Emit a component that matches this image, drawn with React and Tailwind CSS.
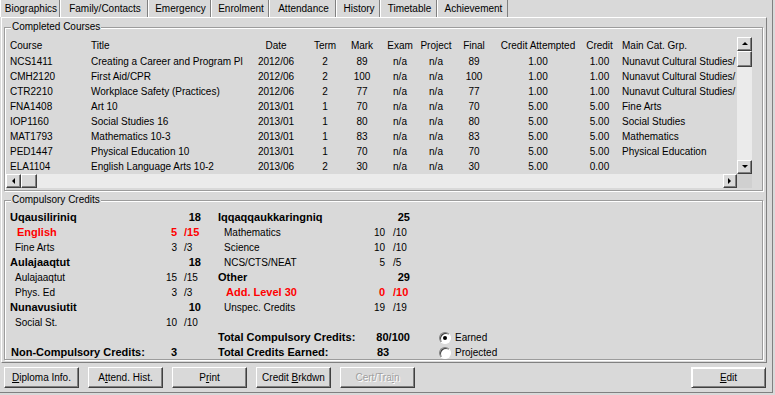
import React from "react";

const tabs = [
  { label: "Biographics", w: "w-[60px]" },
  { label: "Family/Contacts", w: "w-[88px]" },
  { label: "Emergency", w: "w-[63px]" },
  { label: "Enrolment", w: "w-[58px]" },
  { label: "Attendance", w: "w-[67px]" },
  { label: "History", w: "w-[44px]" },
  { label: "Timetable", w: "w-[57px]" },
  { label: "Achievement", w: "w-[71px]" },
];

const courses = [
  ["NCS1411", "Creating a Career and Program Planning", "2012/06", "2", "89", "n/a", "n/a", "89", "1.00", "1.00", "Nunavut Cultural Studies/"],
  ["CMH2120", "First Aid/CPR", "2012/06", "2", "100", "n/a", "n/a", "100", "1.00", "1.00", "Nunavut Cultural Studies/"],
  ["CTR2210", "Workplace Safety (Practices)", "2012/06", "2", "77", "n/a", "n/a", "77", "1.00", "1.00", "Nunavut Cultural Studies/"],
  ["FNA1408", "Art 10", "2013/01", "1", "70", "n/a", "n/a", "70", "5.00", "5.00", "Fine Arts"],
  ["IOP1160", "Social Studies 16", "2013/01", "1", "80", "n/a", "n/a", "80", "5.00", "5.00", "Social Studies"],
  ["MAT1793", "Mathematics 10-3", "2013/01", "1", "83", "n/a", "n/a", "83", "5.00", "5.00", "Mathematics"],
  ["PED1447", "Physical Education 10", "2013/01", "1", "70", "n/a", "n/a", "70", "5.00", "5.00", "Physical Education"],
  ["ELA1104", "English Language Arts 10-2", "2013/06", "2", "30", "n/a", "n/a", "30", "5.00", "0.00", ""],
];

const headers = ["Course", "Title", "Date", "Term", "Mark", "Exam", "Project", "Final", "Credit Attempted", "Credit", "Main Cat. Grp."];

// cell alignment per column
const cellCls = [
  "pl-[4px]",
  "pl-[2px]",
  "text-center",
  "text-center",
  "text-center",
  "text-center",
  "text-center",
  "text-center",
  "text-center",
  "text-center",
  "pl-[6px]",
];

const gridCols = "grid grid-cols-[83px_154px_66px_32px_42px_34px_38px_38px_90px_33px_121px]";

const leftRows = [
  { type: "cat", label: "Uqausiliriniq", total: "18" },
  { type: "sub", label: "English", num: "5", of: "/15", red: true },
  { type: "sub", label: "Fine Arts", num: "3", of: "/3" },
  { type: "cat", label: "Aulajaaqtut", total: "18" },
  { type: "sub", label: "Aulajaaqtut", num: "15", of: "/15" },
  { type: "sub", label: "Phys. Ed", num: "3", of: "/3" },
  { type: "cat", label: "Nunavusiutit", total: "10" },
  { type: "sub", label: "Social St.", num: "10", of: "/10" },
];

const midRows = [
  { type: "cat", label: "Iqqaqqaukkaringniq", total: "25" },
  { type: "sub", label: "Mathematics", num: "10", of: "/10" },
  { type: "sub", label: "Science", num: "10", of: "/10" },
  { type: "sub", label: "NCS/CTS/NEAT", num: "5", of: "/5" },
  { type: "cat", label: "Other", total: "29" },
  { type: "sub", label: "Add. Level 30", num: "0", of: "/10", red: true },
  { type: "sub", label: "Unspec. Credits", num: "19", of: "/19" },
];

const raised =
  "bg-[#d9d9d9] border border-t-white border-l-white border-r-[#404040] border-b-[#404040] shadow-[inset_-1px_-1px_0_#808080]";

function Arrow({ dir }) {
  const pts = {
    up: "1,5 4,2 7,5",
    down: "1,2 4,5 7,2",
    left: "5,1 2,4 5,7",
    right: "2,1 5,4 2,7",
  }[dir];
  return (
    <svg width="8" height="8" viewBox="0 0 8 8">
      <polygon points={pts} fill="#000" />
    </svg>
  );
}

function GroupBox({ title, className, children }) {
  return (
    <div className={"relative border border-[#9c9c9c] shadow-[inset_1px_1px_0_#fff,1px_1px_0_#fff] " + className}>
      <span className="absolute -top-[7px] left-[6px] bg-[#d9d9d9] px-[1px] leading-[12px]">{title}</span>
      {children}
    </div>
  );
}

function Btn({ children, className = "", disabled }) {
  return (
    <button
      className={
        "h-[21px] w-[75px] flex items-center justify-center leading-none " +
        raised +
        (disabled ? " text-[#a0a0a0] [text-shadow:1px_1px_0_#fff]" : " text-black") +
        " " +
        className
      }
    >
      <span className="whitespace-pre">{children}</span>
    </button>
  );
}

function SubRow({ r, labelW, indent, redIndent, gapW, ofW }) {
  return (
    <div className={"h-[15px] flex items-center " + (r.red ? "text-[#ff0000] font-bold text-[11px]" : "")}>
      <span className={labelW + " " + (r.red ? redIndent : indent) + " whitespace-nowrap"}>{r.label}</span>
      <span className="w-[20px] text-right">{r.num}</span>
      <span className={gapW} />
      <span className={ofW}>{r.of}</span>
    </div>
  );
}

export default function App() {
  return (
    <div className="w-[775px] h-[395px] bg-[#d9d9d9] font-['Liberation_Sans',Arial,sans-serif] text-[10px] text-black overflow-hidden">
      <div className="w-[773px] h-[393px] border-r border-b border-[#808080] flex flex-col">
        {/* tabs */}
        <div className="h-[17px] flex">
          {tabs.map((t) => (
            <div
              key={t.label}
              className={
                t.w +
                " h-full flex items-center justify-center pl-[2px] border-l border-white border-r border-r-[#808080] whitespace-nowrap"
              }
            >
              {t.label}
            </div>
          ))}
        </div>

        {/* tab page */}
        <div className="ml-[1px] w-[766px] h-[346px] border-t border-l border-white border-r border-b border-r-[#808080] border-b-[#808080] pl-[2px]">
          <GroupBox title="Completed Courses" className="mt-[9px] w-[759px] h-[164px]">
            <div className="pt-[9px] pl-[1px] flex">
              <div className="flex flex-col">
                <div className="w-[731px] h-[137px] overflow-hidden">
                  <div className={gridCols + " h-[17px] items-center"}>
                    {headers.map((h, i) => (
                      <div key={h} className={cellCls[i] + " whitespace-nowrap overflow-hidden"}>
                        {h}
                      </div>
                    ))}
                  </div>
                  {courses.map((row) => (
                    <div key={row[0]} className={gridCols + " h-[15px] items-center"}>
                      {row.map((c, i) => (
                        <div key={i} className={cellCls[i] + " whitespace-nowrap overflow-hidden text-clip"}>
                          {c}
                        </div>
                      ))}
                    </div>
                  ))}
                </div>
                {/* horizontal scrollbar */}
                <div className="w-[731px] h-[14px] flex bg-[#ebebeb]">
                  <div className={"w-[15px] h-full flex items-center justify-center " + raised}>
                    <Arrow dir="left" />
                  </div>
                  <div className={"w-[16px] h-full " + raised} />
                  <div className="flex-1" />
                  <div className={"w-[14px] h-full flex items-center justify-center " + raised}>
                    <Arrow dir="right" />
                  </div>
                </div>
              </div>
              {/* vertical scrollbar */}
              <div className="flex flex-col">
                <div className="w-[15px] h-[137px] flex flex-col bg-[#ebebeb]">
                  <div className={"h-[14px] flex items-center justify-center " + raised}>
                    <Arrow dir="up" />
                  </div>
                  <div className={"h-[16px] " + raised} />
                  <div className="flex-1" />
                  <div className={"h-[14px] flex items-center justify-center " + raised}>
                    <Arrow dir="down" />
                  </div>
                </div>
                <div className="w-[15px] h-[14px] bg-[#d0d0d0]" />
              </div>
            </div>
          </GroupBox>

          <GroupBox title="Compulsory Credits" className="mt-[9px] w-[759px] h-[160px]">
            <div className="pt-[9px] flex">
              {/* left column */}
              <div className="ml-[4px] w-[195px] flex flex-col">
                {leftRows.map((r, i) =>
                  r.type === "cat" ? (
                    <div key={i} className="h-[15px] flex items-center justify-between font-bold text-[11px] pr-[3px]">
                      <span className="pl-[1px]">{r.label}</span>
                      <span>{r.total}</span>
                    </div>
                  ) : (
                    <SubRow key={i} r={r} labelW="w-[148px]" indent="pl-[6px]" redIndent="pl-[8px]" gapW="w-[7px]" ofW="w-[20px]" />
                  )
                )}
                <div className="h-[15px]" />
                <div className="h-[15px] flex items-center font-bold text-[11px]">
                  <span className="w-[148px] pl-[2px] whitespace-nowrap">Non-Compulsory Credits:</span>
                  <span className="w-[20px] text-right">3</span>
                </div>
              </div>

              {/* middle column */}
              <div className="ml-[12px] w-[194px] flex flex-col">
                {midRows.map((r, i) =>
                  r.type === "cat" ? (
                    <div key={i} className="h-[15px] flex items-center justify-between font-bold text-[11px]">
                      <span className="pl-[2px]">{r.label}</span>
                      <span>{r.total}</span>
                    </div>
                  ) : (
                    <SubRow key={i} r={r} labelW="w-[149px]" indent="pl-[8px]" redIndent="pl-[10px]" gapW="w-[8px]" ofW="w-[17px]" />
                  )
                )}
                <div className="h-[15px]" />
                <div className="h-[15px] flex items-center font-bold text-[11px]">
                  <span className="w-[161px] pl-[2px] whitespace-nowrap">Total Compulsory Credits:</span>
                  <span>80/100</span>
                </div>
                <div className="h-[15px] flex items-center font-bold text-[11px]">
                  <span className="w-[161px] pl-[2px] whitespace-nowrap">Total Credits Earned:</span>
                  <span>83</span>
                </div>
              </div>

              {/* radio column */}
              <div className="ml-[29px] flex flex-col justify-end">
                {[
                  ["Earned", true],
                  ["Projected", false],
                ].map(([label, on]) => (
                  <div key={label} className="h-[15px] flex items-center gap-[4px]">
                    <span className="w-[12px] h-[12px] rounded-full bg-white border border-t-[#808080] border-l-[#808080] border-r-white border-b-white shadow-[inset_1px_1px_0_#404040] flex items-center justify-center">
                      {on && <span className="w-[4px] h-[4px] rounded-full bg-black" />}
                    </span>
                    <span>{label}</span>
                  </div>
                ))}
              </div>
            </div>
          </GroupBox>
        </div>

        {/* buttons */}
        <div className="mt-[4px] pl-[4px] pr-[6px] flex">
          <div className="flex gap-[9px]">
            <Btn>
              <span className="underline">D</span>iploma Info.
            </Btn>
            <Btn>
              A<span className="underline">t</span>tend. Hist.
            </Btn>
            <Btn>
              P<span className="underline">r</span>int
            </Btn>
            <Btn>
              Credit <span className="underline">B</span>rkdwn
            </Btn>
            <Btn disabled className="w-[74px]">
              Cert/Tra<span className="underline">i</span>n
            </Btn>
          </div>
          <div className="flex-1" />
          <Btn className="border-[#202020] shadow-[inset_1px_1px_0_#fff,inset_-1px_-1px_0_#808080]">
            <span className="underline">E</span>dit
          </Btn>
        </div>
      </div>
    </div>
  );
}
